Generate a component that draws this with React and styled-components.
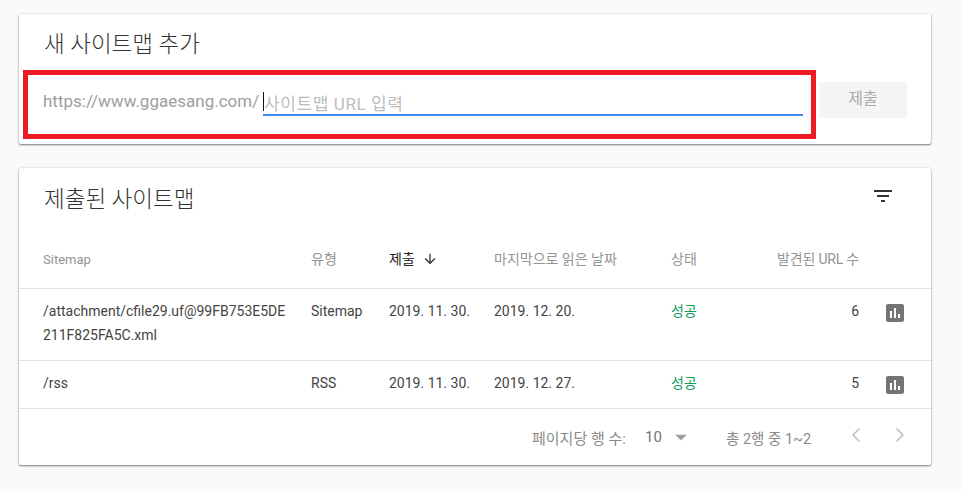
import React from 'react'
import styled, { createGlobalStyle } from 'styled-components'
import { MdArrowDownward, MdFilterList, MdAssessment, MdArrowDropDown } from 'react-icons/md'
import { ChevronLeft, ChevronRight } from 'lucide-react'

const Global = createGlobalStyle`
  html, body { margin: 0; padding: 0; background: #fafafa; }
  body { font-family: Roboto, "Noto Sans CJK KR", sans-serif; color: #333; }
`
const Page = styled.div`
  width: 961px;
  height: 492px;
  box-sizing: border-box;
  padding: 14px 30px 0 19px;
  overflow: hidden;
`
const Card = styled.section`
  background: #fff;
  border-radius: 2px;
  box-shadow: 0 1px 2px rgba(0,0,0,.5), 0 0 3px rgba(0,0,0,.1);
  margin-bottom: 24px;
`
const AddCard = styled(Card)`
  height: 130px;
  box-sizing: border-box;
  padding-top: 15px;
`
const CardTitle = styled.h2`
  margin: 0;
  padding-left: 25px;
  font-size: 22.5px;
  line-height: 30px;
  font-weight: 300;
  color: #333;
`
const TableTitle = styled(CardTitle)`
  padding-left: 0;
`
const FormRow = styled.div`
  display: flex;
  align-items: flex-start;
  margin: 11px 0 0 4px;
`
const RedBox = styled.div`
  width: 793px;
  height: 69px;
  box-sizing: border-box;
  border: 5px solid #ed1c24;
  display: flex;
  align-items: flex-start;
  padding: 15px 8px 0 15px;
`
const Prefix = styled.span`
  font-size: 17px;
  line-height: 22px;
  color: #9e9e9e;
  width: 220px;
  white-space: nowrap;
`
const Field = styled.div`
  flex: 1;
  height: 24px;
  border-bottom: 2px solid #4285f4;
  position: relative;
  font-size: 17px;
  line-height: 28px;
  letter-spacing: .6px;
  color: #bdbdbd;
  white-space: nowrap;
  padding-left: 1px;
  &::before {
    content: '';
    position: absolute;
    left: 0;
    top: 2px;
    width: 1px;
    height: 19px;
    background: #111;
  }
`
const SubmitButton = styled.div`
  width: 88px;
  height: 36px;
  margin: 12px 0 0 3px;
  border-radius: 2px;
  background: #f5f5f5;
  color: #aaa;
  font-size: 16px;
  line-height: 34px;
  text-align: center;
`
const TableCard = styled(Card)`
  height: 297px;
  display: flex;
  flex-direction: column;
`
const TableHead = styled.div`
  display: flex;
  justify-content: space-between;
  box-sizing: border-box;
  padding: 16px 36px 0 25px;
  height: 47px;
  & svg { font-size: 24px; color: #333; }
`
const Row = styled.div`
  display: grid;
  grid-template-columns: 268px 78px 105px 177px 80px 108px 27px 18px;
  padding-left: 24px;
  box-sizing: border-box;
  height: ${p => p.$h}px;
  border-bottom: 1px solid #e0e0e0;
`
const HeadCell = styled.div`
  font-size: ${p => (p.$latin ? 13 : 14)}px;
  line-height: ${p => (p.$latin ? 20 : 18)}px;
  padding-top: 35px;
  white-space: nowrap;
  color: ${p => (p.$active ? '#212121' : '#949494')};
  text-align: ${p => (p.$right ? 'right' : 'left')};
  letter-spacing: ${p => (p.$right ? '-.2px' : '0')};
  display: ${p => (p.$active ? 'flex' : 'block')};
  & svg { font-size: 16px; margin: 1px 0 0 7px; color: #333; }
`
const Cell = styled.div`
  font-size: 14px;
  line-height: 24px;
  padding-top: 10px;
  color: #444;
  text-align: ${p => (p.$right ? 'right' : 'left')};
`
const PathCell = styled(Cell)`
  width: 244px;
  word-break: break-all;
`
const Status = styled(Cell)`
  color: #0f9d58;
`
const ChartIcon = styled.div`
  font-size: 24px;
  line-height: 0;
  margin: 12px 0 0 -3px;
  color: #757575;
`
const Footer = styled.div`
  display: flex;
  align-items: center;
  height: 56px;
  padding-left: 513px;
  font-size: 15px;
  color: #8a8a8a;
  white-space: nowrap;
`
const RowsLabel = styled.span`
  width: 113px;
`
const RowsValue = styled.span`
  width: 30px;
  color: #757575;
`
const Caret = styled.span`
  width: 59px;
  line-height: 0;
  font-size: 28px;
  margin-left: -8px;
  color: #9e9e9e;
`
const Range = styled.span`
  width: 118px;
  font-size: 14.5px;
`
const Pager = styled.span`
  display: flex;
  gap: 20px;
  line-height: 0;
  margin-top: -4px;
  color: #bdbdbd;
`
const rows = [
  { path: '/attachment/cfile29.uf@99FB753E5DE211F825FA5C.xml', type: 'Sitemap', sent: '2019. 11. 30.', read: '2019. 12. 20.', count: 6, h: 72 },
  { path: '/rss', type: 'RSS', sent: '2019. 11. 30.', read: '2019. 12. 27.', count: 5, h: 48 },
]

const App = () => {
  return (
    <Page>
      <Global />
      <AddCard>
        <CardTitle>새 사이트맵 추가</CardTitle>
        <FormRow>
          <RedBox>
            <Prefix>https://www.ggaesang.com/</Prefix>
            <Field>사이트맵 URL 입력</Field>
          </RedBox>
          <SubmitButton>제출</SubmitButton>
        </FormRow>
      </AddCard>
      <TableCard>
        <TableHead>
          <TableTitle>제출된 사이트맵</TableTitle>
          <MdFilterList />
        </TableHead>
        <Row $h={74}>
          <HeadCell $latin>Sitemap</HeadCell>
          <HeadCell>유형</HeadCell>
          <HeadCell $active>제출 <MdArrowDownward /></HeadCell>
          <HeadCell>마지막으로 읽은 날짜</HeadCell>
          <HeadCell>상태</HeadCell>
          <HeadCell $right>발견된 URL 수</HeadCell>
        </Row>
        {rows.map(r => (
          <Row key={r.path} $h={r.h}>
            <PathCell>{r.path}</PathCell>
            <Cell>{r.type}</Cell>
            <Cell>{r.sent}</Cell>
            <Cell>{r.read}</Cell>
            <Status>성공</Status>
            <Cell $right>{r.count}</Cell>
            <span />
            <ChartIcon><MdAssessment /></ChartIcon>
          </Row>
        ))}
        <Footer>
          <RowsLabel>페이지당 행 수:</RowsLabel>
          <RowsValue>10</RowsValue>
          <Caret><MdArrowDropDown /></Caret>
          <Range>총 2행 중 1~2</Range>
          <Pager><ChevronLeft size={24} strokeWidth={1.5} /><ChevronRight size={24} strokeWidth={1.5} /></Pager>
        </Footer>
      </TableCard>
    </Page>
  )
}

export default App
